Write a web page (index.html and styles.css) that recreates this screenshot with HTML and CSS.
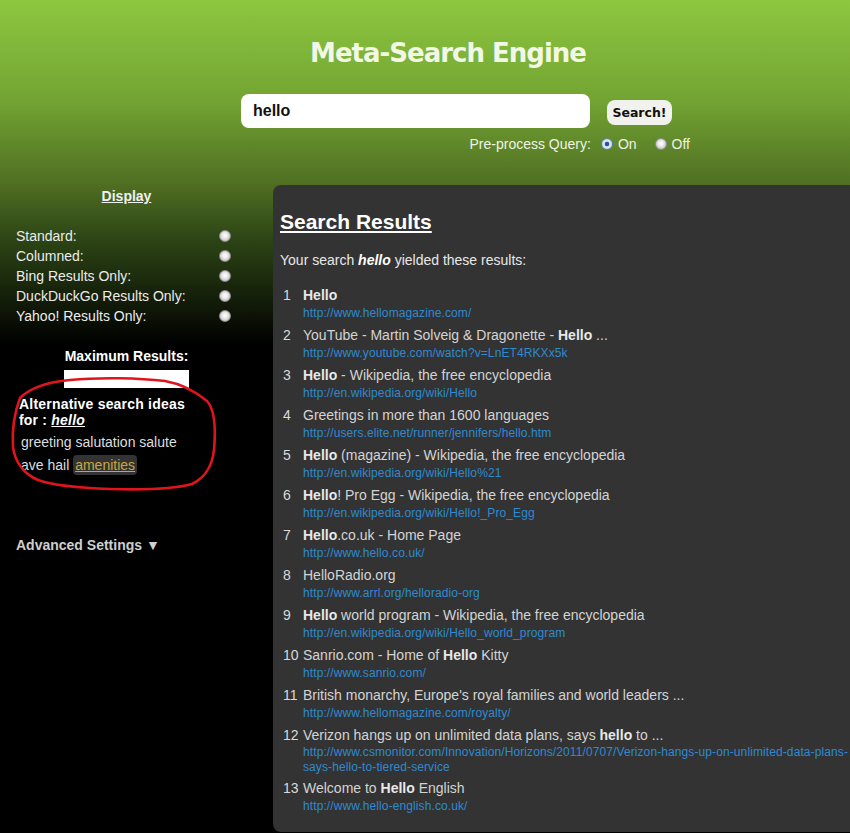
FILE: index.html
```html
<!DOCTYPE html>
<html>
<head>
<meta charset="utf-8">
<title>Meta-Search Engine</title>
<link rel="stylesheet" href="styles.css">
</head>
<body>
<header class="top">
  <h1 class="brand">Meta-Search Engine</h1>
  <div class="search-row">
    <div class="search-box">hello</div>
    <button class="search-btn">Search!</button>
  </div>
  <div class="preproc">
    <span class="preproc-label">Pre-process Query:</span>
    <span class="radio radio-on"></span><span class="opt">On</span>
    <span class="radio radio-off"></span><span class="opt">Off</span>
  </div>
</header>

<div class="layout">
  <aside class="side">
    <h3 class="side-head">Display</h3>
    <ul class="display-list">
      <li><span>Standard:</span><span class="radio"></span></li>
      <li><span>Columned:</span><span class="radio"></span></li>
      <li><span>Bing Results Only:</span><span class="radio"></span></li>
      <li><span>DuckDuckGo Results Only:</span><span class="radio"></span></li>
      <li><span>Yahoo! Results Only:</span><span class="radio"></span></li>
    </ul>
    <div class="max-head">Maximum Results:</div>
    <div class="max-input"></div>
    <div class="alt">
      <div class="alt-head">Alternative search ideas<br>for : <em class="alt-q">hello</em></div>
      <div class="alt-words">greeting salutation salute<br>ave hail <span class="w-hot">amenities</span></div>
    </div>
    <div class="adv">Advanced Settings ▼</div>
  </aside>

  <main class="results">
    <h2 class="res-head">Search Results</h2>
    <p class="res-intro">Your search <b><i>hello</i></b> yielded these results:</p>
    <ol class="res-list">
      <li><span class="n">1</span><div class="r"><div class="t"><b>Hello</b></div><a class="u">http://www.hellomagazine.com/</a></div></li>
      <li><span class="n">2</span><div class="r"><div class="t">YouTube - Martin Solveig &amp; Dragonette - <b>Hello</b> ...</div><a class="u">http://www.youtube.com/watch?v=LnET4RKXx5k</a></div></li>
      <li><span class="n">3</span><div class="r"><div class="t"><b>Hello</b> - Wikipedia, the free encyclopedia</div><a class="u">http://en.wikipedia.org/wiki/Hello</a></div></li>
      <li><span class="n">4</span><div class="r"><div class="t">Greetings in more than 1600 languages</div><a class="u">http://users.elite.net/runner/jennifers/hello.htm</a></div></li>
      <li><span class="n">5</span><div class="r"><div class="t"><b>Hello</b> (magazine) - Wikipedia, the free encyclopedia</div><a class="u">http://en.wikipedia.org/wiki/Hello%21</a></div></li>
      <li><span class="n">6</span><div class="r"><div class="t"><b>Hello</b>! Pro Egg - Wikipedia, the free encyclopedia</div><a class="u">http://en.wikipedia.org/wiki/Hello!_Pro_Egg</a></div></li>
      <li><span class="n">7</span><div class="r"><div class="t"><b>Hello</b>.co.uk - Home Page</div><a class="u">http://www.hello.co.uk/</a></div></li>
      <li><span class="n">8</span><div class="r"><div class="t">HelloRadio.org</div><a class="u">http://www.arrl.org/helloradio-org</a></div></li>
      <li><span class="n">9</span><div class="r"><div class="t"><b>Hello</b> world program - Wikipedia, the free encyclopedia</div><a class="u">http://en.wikipedia.org/wiki/Hello_world_program</a></div></li>
      <li><span class="n">10</span><div class="r"><div class="t">Sanrio.com - Home of <b>Hello</b> Kitty</div><a class="u">http://www.sanrio.com/</a></div></li>
      <li><span class="n">11</span><div class="r"><div class="t">British monarchy, Europe's royal families and world leaders ...</div><a class="u">http://www.hellomagazine.com/royalty/</a></div></li>
      <li><span class="n">12</span><div class="r"><div class="t">Verizon hangs up on unlimited data plans, says <b>hello</b> to ...</div><a class="u u-long">http://www.csmonitor.com/Innovation/Horizons/2011/0707/Verizon-hangs-up-on-unlimited-data-plans-says-hello-to-tiered-service</a></div></li>
      <li><span class="n">13</span><div class="r"><div class="t">Welcome to <b>Hello</b> English</div><a class="u">http://www.hello-english.co.uk/</a></div></li>
    </ol>
  </main>
</div>

<svg class="annot" width="240" height="130" viewBox="0 370 240 130" xmlns="http://www.w3.org/2000/svg">
  <path d="M20 398 C30 388 48 382 70 380 C100 377 140 378 165 381 C182 384 196 392 207 401 C215 410 216 428 214 450 C212 466 206 477 192 484 C170 490 140 490 110 489 C80 488 55 486 38 480 C24 474 15 462 13 447 C12 432 14 414 20 398 Z" fill="none" stroke="#e0141c" stroke-width="2.6" stroke-linecap="round"/>
</svg>
</body>
</html>
```
FILE: styles.css
```css
html, body {
  margin: 0;
  padding: 0;
  overflow: hidden;
}
body {
  position: relative;
  width: 850px;
  min-height: 833px;
  background-color: #000;
  background-image: linear-gradient(to bottom, #8dc73f 0px, #73a433 100px, #4f6e22 185px, #2c4415 240px, #000 345px);
  background-repeat: no-repeat;
  background-size: 100% 360px;
  font-family: "Liberation Sans", Arial, sans-serif;
  font-size: 14px;
  color: #e4e4e4;
}

/* header */
.top {
  padding-top: 36px;
  height: 149px;
}
.brand {
  margin: 0;
  padding-left: 46px;
  text-align: center;
  font-family: "DejaVu Sans", sans-serif;
  font-weight: bold;
  font-size: 26px;
  line-height: 34px;
  color: #f2f8e6;
  letter-spacing: -1px;
}
.search-row {
  display: flex;
  align-items: center;
  margin-top: 24px;
  padding-left: 241px;
  gap: 17px;
}
.search-box {
  box-sizing: border-box;
  width: 349px;
  height: 34px;
  background: #fff;
  border-radius: 8px;
  padding-left: 12px;
  font-size: 16px;
  font-weight: bold;
  line-height: 34px;
  color: #111;
}
.search-btn {
  width: 65px;
  height: 25px;
  border: none;
  border-radius: 8px;
  background: #f1f1ee;
  font-family: "DejaVu Sans", sans-serif;
  font-weight: bold;
  font-size: 12.5px;
  color: #111;
  padding: 0;
  margin-top: 2px;
}
.preproc {
  display: flex;
  align-items: center;
  justify-content: flex-end;
  padding-right: 160px;
  margin-top: 7px;
  height: 18px;
  font-size: 14px;
  color: #eef3e6;
}
.preproc-label { margin-right: 10px; }
.preproc .opt { margin-left: 5px; }
.preproc .opt:nth-of-type(3) { margin-right: 18px; }

.radio {
  display: inline-block;
  box-sizing: border-box;
  width: 12px;
  height: 12px;
  border-radius: 50%;
  border: 1px solid #8c8c8c;
  background: radial-gradient(circle at 50% 45%, #ffffff 0%, #f0f0f0 30%, #c4c4c4 75%, #a8a8a8 100%);
}
.radio-on {
  border-color: #5a7fa6;
  background: radial-gradient(circle at 50% 50%, #1f4f8a 0%, #2c5e98 28%, #dfe8f2 38%, #c4d2e2 100%);
}

/* layout */
.layout {
  display: flex;
  align-items: flex-start;
}
.side {
  flex: none;
  width: 253px;
  box-sizing: border-box;
  padding: 1px 0 0 0;
  margin-right: 20px;
}
.side-head {
  margin: 0;
  text-align: center;
  font-size: 14px;
  font-weight: bold;
  line-height: 20px;
  text-decoration: underline;
  color: #f0f0f0;
}
.display-list {
  list-style: none;
  margin: 20px 0 0 0;
  padding: 0 22px 0 16px;
}
.display-list li {
  display: flex;
  justify-content: space-between;
  align-items: center;
  height: 20px;
  color: #ececec;
}
.max-head {
  margin-top: 20px;
  text-align: center;
  font-weight: bold;
  line-height: 20px;
  color: #fff;
}
.max-input {
  width: 125px;
  height: 18px;
  margin: 4px auto 0;
  background: #fff;
}
.alt {
  margin: 8px 0 0 19px;
  width: 190px;
}
.alt-head {
  font-weight: bold;
  line-height: 16.2px;
  color: #fff;
  letter-spacing: 0.2px;
}
.alt-q {
  text-decoration: underline;
}
.alt-words {
  margin-top: 3px;
  padding-left: 2px;
  line-height: 23px;
  color: #dedede;
  font-size: 14px;
}
.w-hot {
  padding: 2px 2px;
  border-radius: 4px;
  background: #333;
  color: #c9a63e;
  text-decoration: underline;
}
.adv {
  margin: 58px 0 0 16px;
  font-weight: bold;
  line-height: 20px;
  color: #cfcfcf;
}

/* results */
.results {
  flex: none;
  width: 600px;
  box-sizing: border-box;
  background: #333;
  border-radius: 8px 0 0 8px;
  padding: 25px 0 18px 7px;
}
.res-head {
  margin: 0;
  font-size: 21px;
  line-height: 24px;
  font-weight: bold;
  text-decoration: underline;
  color: #fff;
}
.res-intro {
  margin: 16px 0 0 0;
  line-height: 20px;
  color: #e8e8e8;
}
.res-intro b { color: #fff; }
.res-list {
  list-style: none;
  margin: 15px 0 0 0;
  padding: 0 0 0 3px;
}
.res-list li {
  display: flex;
  margin-bottom: 4px;
}
.res-list li:last-child { margin-bottom: 0; }
.n {
  flex: none;
  min-width: 16px;
  margin-right: 4px;
  line-height: 20px;
  color: #dadada;
}
.r {
  width: 562px;
}
.t {
  line-height: 20px;
  color: #d4d4d4;
  white-space: nowrap;
}
.t b { color: #e8e8e8; }
.u {
  display: block;
  font-size: 12px;
  line-height: 16px;
  color: #2e8ad0;
  text-decoration: none;
  letter-spacing: 0.1px;
}
.u-long {
  line-height: 15px;
  margin-bottom: -1px;
}

/* hand-drawn annotation */
.annot {
  position: absolute;
  left: 0;
  top: 370px;
  pointer-events: none;
}
```
